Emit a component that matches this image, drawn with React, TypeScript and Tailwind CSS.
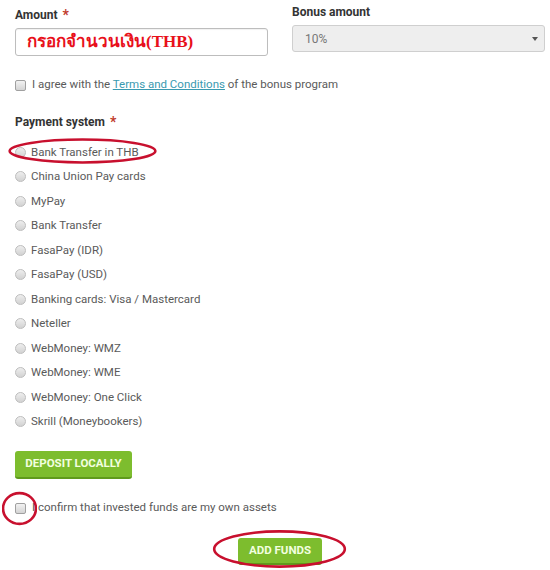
const METHODS = [
  "Bank Transfer in THB",
  "China Union Pay cards",
  "MyPay",
  "Bank Transfer",
  "FasaPay (IDR)",
  "FasaPay (USD)",
  "Banking cards: Visa / Mastercard",
  "Neteller",
  "WebMoney: WMZ",
  "WebMoney: WME",
  "WebMoney: One Click",
  "Skrill (Moneybookers)",
];

function Radio() {
  return (
    <span className="h-[11px] w-[11px] shrink-0 rounded-full border border-[#bdbdbd] bg-gradient-to-b from-[#eeeeee] to-[#d2d2d2]" />
  );
}

function Checkbox() {
  return (
    <span className="h-[11px] w-[11px] shrink-0 rounded-[2px] border border-[#a0a0a0] bg-gradient-to-b from-[#f2f2f2] to-[#d4d4d4]" />
  );
}

function Ring({ className }: { className: string }) {
  return (
    <svg className={`pointer-events-none absolute ${className}`} viewBox="0 0 100 100" preserveAspectRatio="none">
      <ellipse cx="50" cy="50" rx="47" ry="44" fill="none" stroke="#c8102e" strokeWidth="2.6" vectorEffect="non-scaling-stroke" />
    </svg>
  );
}

export default function App() {
  return (
    <div className="relative h-[570px] w-[550px] bg-white px-[15px] font-['Roboto',sans-serif] text-[11.5px] text-[#5a5a5a]">
      <div className="grid grid-cols-[253px_253px] gap-x-[24px]">
        <div className="pt-[8px]">
          <div className="flex items-center gap-[5px] text-[12px] font-bold leading-[14px] text-[#333]">
            Amount <span className="text-[14px] text-[#c0392b]">*</span>
          </div>
          <div className="mt-[6px] flex h-[28px] items-center rounded-[3px] border border-[#bdbdbd] px-[11px] font-['Liberation_Serif','Noto_Sans',serif] text-[17px] font-bold text-[#e8101a] shadow-[inset_0_1px_1px_rgba(0,0,0,0.06)]">
            กรอกจำนวนเงิน(THB)
          </div>
        </div>
        <div className="pt-[5px]">
          <div className="text-[12px] font-bold leading-[14px] text-[#333]">Bonus amount</div>
          <div className="mt-[6px] flex h-[27px] items-center justify-between rounded-[3px] border border-[#cfcfcf] bg-[#eeeeee] pl-[12px] pr-[6px] text-[12px] text-[#777]">
            10%
            <span className="h-0 w-0 border-x-[3px] border-t-[4px] border-x-transparent border-t-[#555]" />
          </div>
        </div>
      </div>

      <label className="mt-[21px] flex h-[16px] items-center gap-[6px]">
        <Checkbox />
        <span>
          I agree with the <span className="text-[#3a9ab0] underline">Terms and Conditions</span> of the bonus program
        </span>
      </label>

      <div className="mt-[22px] flex items-center gap-[5px] text-[12px] font-bold leading-[14px] text-[#333]">
        Payment system <span className="text-[14px] text-[#c0392b]">*</span>
      </div>

      <ul className="mt-[11px]">
        {METHODS.map((m) => (
          <li key={m} className="flex h-[24.5px] items-center gap-[5px]">
            <Radio />
            <span>{m}</span>
          </li>
        ))}
      </ul>

      <button
        type="button"
        className="mt-[17px] h-[28px] w-[117px] rounded-[3px] border-b-2 border-[#5f9a1c] bg-[#7dbd2e] text-[11.5px] font-bold uppercase text-[#f3ffe0]"
      >
        Deposit locally
      </button>

      <label className="mt-[21px] flex h-[16px] items-center gap-[6px]">
        <Checkbox />
        <span>I confirm that invested funds are my own assets</span>
      </label>

      <div className="mt-[22px] pl-[223px]">
        <button
          type="button"
          className="h-[27px] w-[84px] rounded-[3px] border-b-2 border-[#5f9a1c] bg-[#7dbd2e] text-[11.5px] font-bold uppercase text-[#f3ffe0]"
        >
          Add funds
        </button>
      </div>

      <Ring className="left-[5px] top-[138px] h-[26px] w-[155px]" />
      <Ring className="left-[2px] top-[491px] h-[35px] w-[35px]" />
      <Ring className="left-[210px] top-[529px] h-[40px] w-[139px]" />
    </div>
  );
}
